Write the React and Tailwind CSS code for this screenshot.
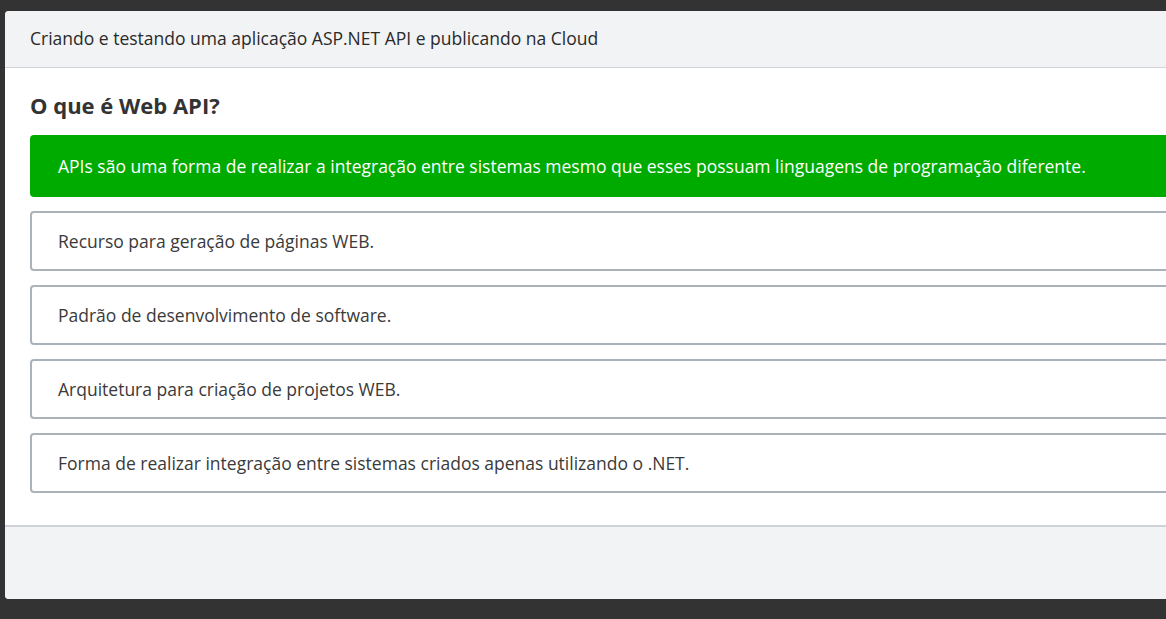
import React from "react";

const options = [
  "Recurso para geração de páginas WEB.",
  "Padrão de desenvolvimento de software.",
  "Arquitetura para criação de projetos WEB.",
  "Forma de realizar integração entre sistemas criados apenas utilizando o .NET.",
];

export default function App() {
  return (
    <div
      className="h-[619px] w-[1166px] overflow-hidden bg-[#333333] pl-[5px] pt-[11px]"
      style={{ fontFamily: '"Open Sans", sans-serif' }}
    >
      <div className="flex h-[588px] w-[1220px] flex-col overflow-hidden rounded-[4px] bg-white">
        {/* header */}
        <div className="flex h-[57px] items-center border-b border-[#cfd2d6] bg-[#f2f3f5] px-[25px] pb-[1px]">
          <span className="text-[17.5px] text-[#2a2a2a]">
            Criando e testando uma aplicação ASP.NET API e publicando na Cloud
          </span>
        </div>

        {/* body */}
        <div className="flex flex-col px-[25px] pb-[32px] pt-[23px]">
          <h2 className="mb-[15px] text-[22px] font-bold leading-[29px] text-[#333333]">
            O que é Web API?
          </h2>
          <div className="flex flex-col gap-[14px]">
            <div className="flex h-[62px] items-center rounded-[4px] bg-[#00ab00] px-[28px] text-[17.5px] font-medium text-white">
              APIs são uma forma de realizar a integração entre sistemas mesmo que esses possuam linguagens de programação diferente.
            </div>
            {options.map((o) => (
              <div
                key={o}
                className="flex h-[60px] items-center rounded-[4px] border-2 border-[#aab2ba] px-[26px] text-[17.5px] text-[#3a3a3a]"
              >
                {o}
              </div>
            ))}
          </div>
        </div>

        {/* footer */}
        <div className="flex-1 border-t-2 border-[#cfd2d6] bg-[#f2f3f5]" />
      </div>
    </div>
  );
}
